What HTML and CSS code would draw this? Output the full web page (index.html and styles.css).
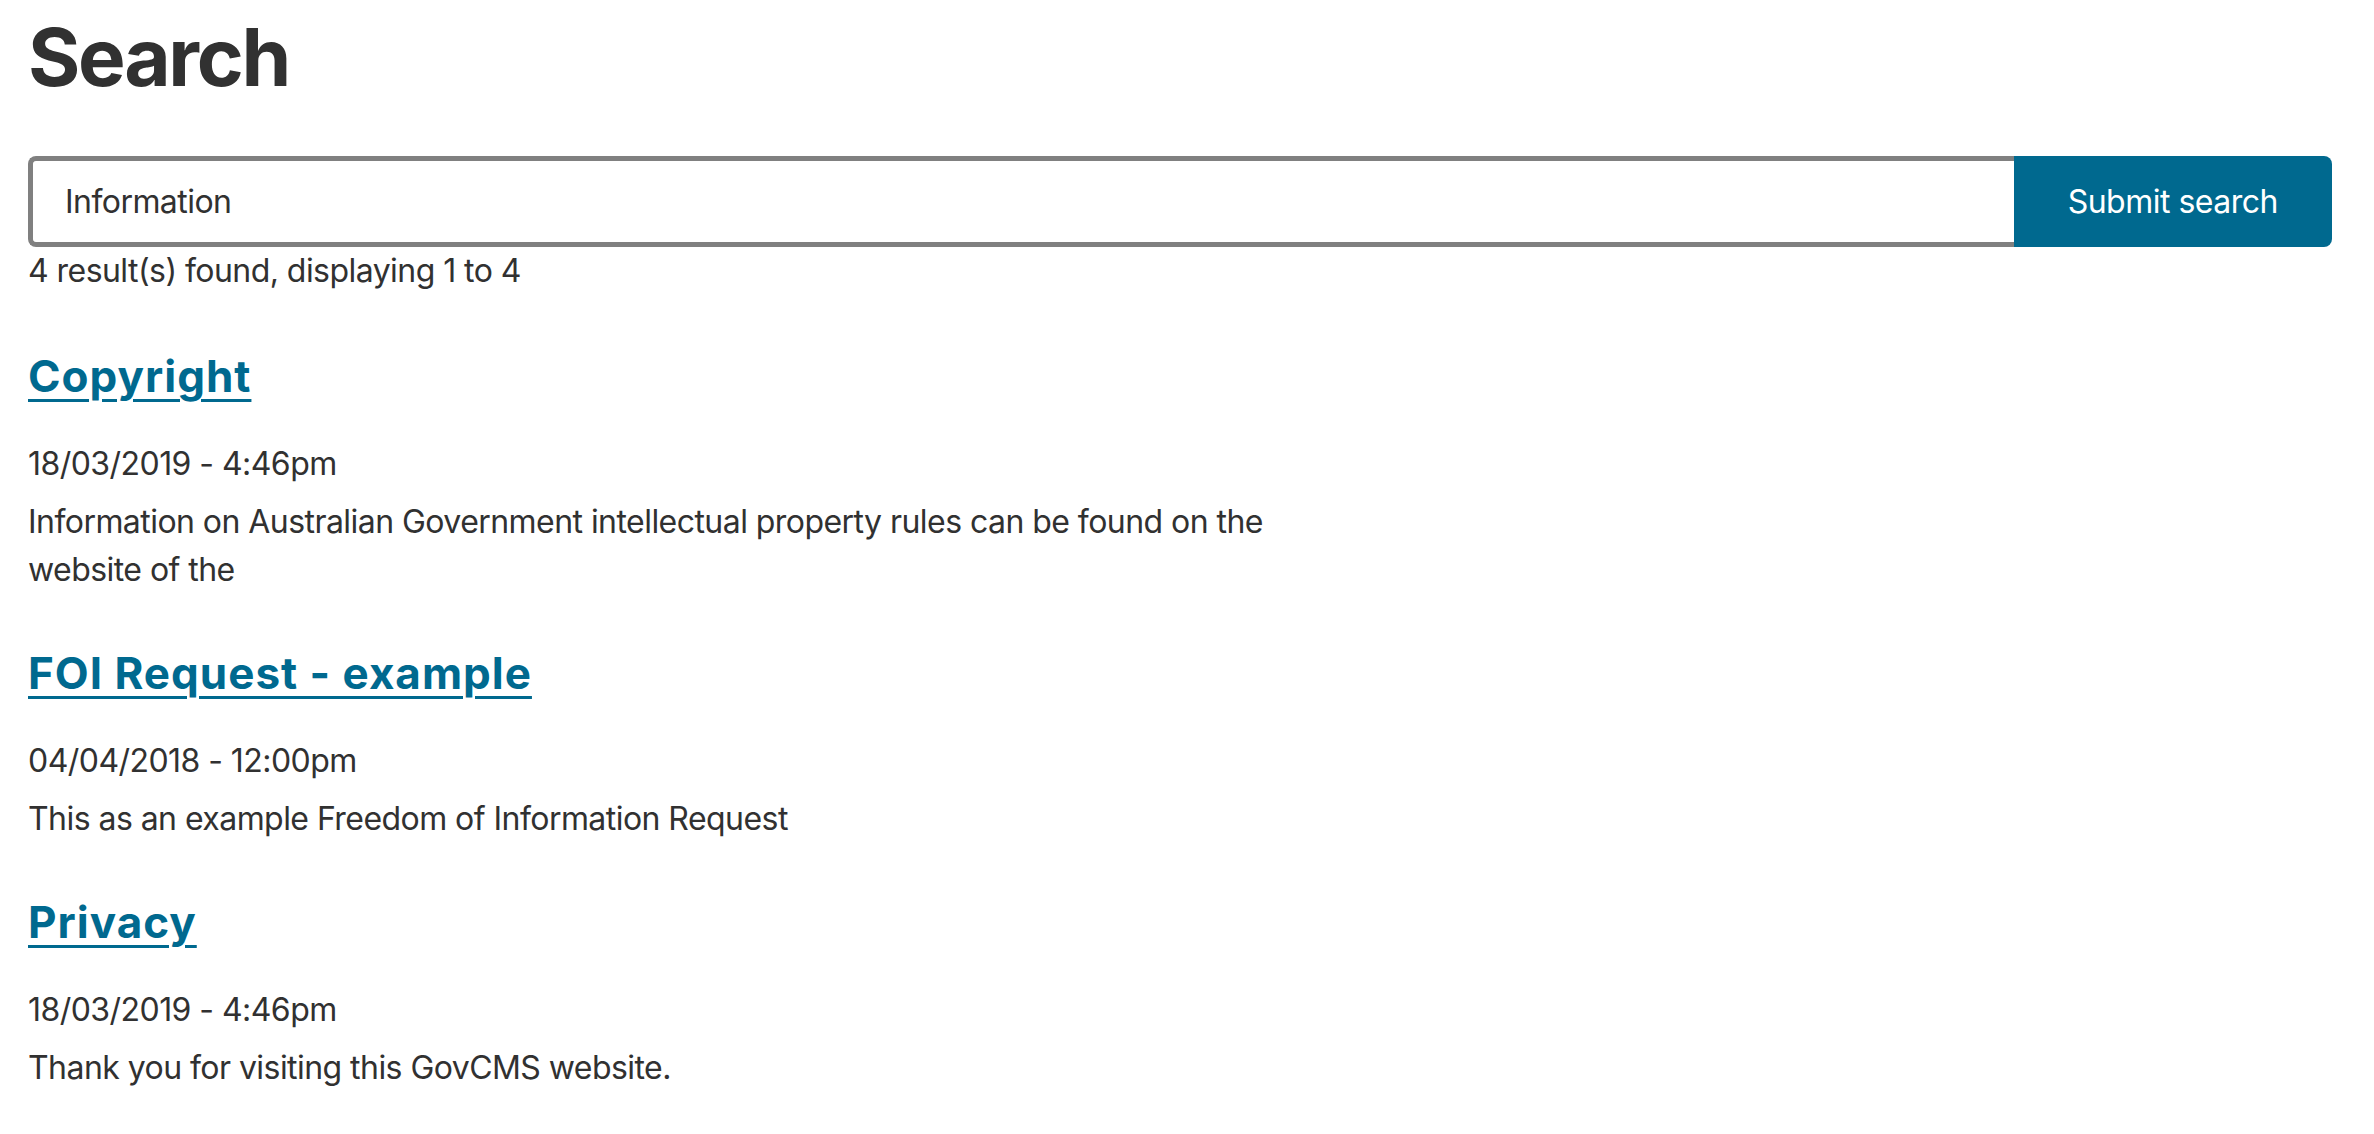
FILE: index.html
```html
<!DOCTYPE html>
<html lang="en">
<head>
<meta charset="utf-8">
<title>Search</title>
<link rel="stylesheet" href="styles.css">
</head>
<body>
<main class="page">
  <h1 class="page-title">Search</h1>
  <form class="search-form" action="#">
    <input class="search-input" type="text" value="Information" aria-label="Search">
    <button class="search-button" type="button">Submit search</button>
  </form>
  <p class="result-count">4 result(s) found, displaying 1 to 4</p>
  <ol class="results">
    <li class="result">
      <h3 class="result-title"><a href="#">Copyright</a></h3>
      <p class="result-date">18/03/2019 - 4:46pm</p>
      <p class="result-summary">Information on Australian Government intellectual property rules can be found on the website of the</p>
    </li>
    <li class="result">
      <h3 class="result-title"><a href="#">FOI Request - example</a></h3>
      <p class="result-date">04/04/2018 - 12:00pm</p>
      <p class="result-summary">This as an example Freedom of Information Request</p>
    </li>
    <li class="result">
      <h3 class="result-title"><a href="#">Privacy</a></h3>
      <p class="result-date">18/03/2019 - 4:46pm</p>
      <p class="result-summary">Thank you for visiting this GovCMS website.</p>
    </li>
  </ol>
</main>
</body>
</html>
```

FILE: styles.css
```css
html, body {
  margin: 0;
  padding: 0;
  background: #ffffff;
}

body {
  font-family: Inter, "Noto Sans", "Liberation Sans", sans-serif;
  color: #313131;
  font-size: 32px;
  line-height: 48px;
  letter-spacing: -0.55px;
}

.page {
  padding: 7px 42px 40px 28px;
}

.page-title {
  margin: 0;
  font-size: 80px;
  line-height: 100px;
  font-weight: 700;
  letter-spacing: -2.3px;
  color: #313131;
}

.search-form {
  display: flex;
  margin-top: 49px;
}

.search-input {
  flex: 1;
  box-sizing: border-box;
  height: 91px;
  margin: 0;
  padding: 0 32px;
  border: 5px solid #808080;
  border-right: none;
  border-radius: 8px 0 0 8px;
  font-family: inherit;
  font-size: 32px;
  letter-spacing: -0.55px;
  color: #313131;
  background: #fff;
  outline: none;
}

.search-button {
  box-sizing: border-box;
  height: 91px;
  margin: 0;
  padding: 0 54px;
  border: none;
  border-radius: 0 8px 8px 0;
  background: #00698f;
  color: #ffffff;
  font-family: inherit;
  font-size: 32px;
  letter-spacing: -0.5px;
  cursor: pointer;
}

.result-count {
  margin: 0;
}

.results {
  list-style: none;
  margin: 0;
  padding: 0;
}

.result {
  margin-top: 52px;
}

.result:first-child {
  margin-top: 54px;
}

.result-title {
  margin: 0;
  font-size: 44px;
  line-height: 55px;
  font-weight: 700;
  letter-spacing: 1px;
}

.result-title a {
  color: #00698f;
  text-decoration: underline;
  text-decoration-thickness: 3px;
  text-underline-offset: 7px;
}

.result-date {
  margin: 36px 0 0;
}

.result-summary {
  margin: 10px 0 0;
  max-width: 1344px;
}
```
